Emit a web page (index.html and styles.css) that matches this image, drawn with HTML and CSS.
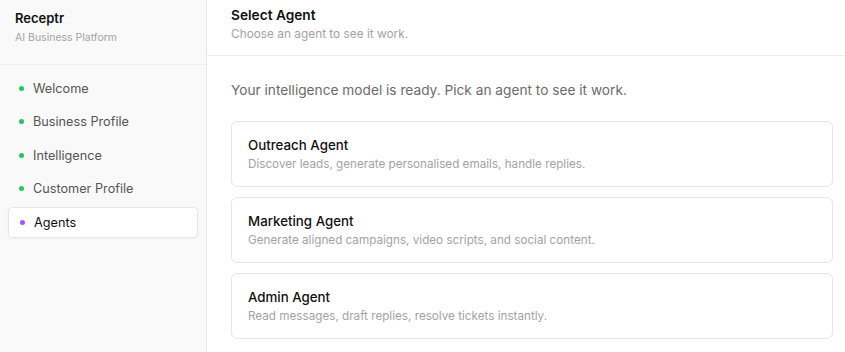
FILE: index.html
```html
<!DOCTYPE html>
<html lang="en">
<head>
<meta charset="utf-8">
<title>Receptr</title>
<link rel="stylesheet" href="styles.css">
</head>
<body>
<div class="app">
  <aside class="sidebar">
    <div class="brand">
      <div class="brand-name">Receptr</div>
      <div class="brand-sub">AI Business Platform</div>
    </div>
    <nav class="nav">
      <div class="nav-item"><span class="dot done"></span>Welcome</div>
      <div class="nav-item"><span class="dot done"></span>Business Profile</div>
      <div class="nav-item"><span class="dot done"></span>Intelligence</div>
      <div class="nav-item"><span class="dot done"></span>Customer Profile</div>
      <div class="nav-item active"><span class="dot current"></span>Agents</div>
    </nav>
  </aside>
  <main class="main">
    <header class="page-header">
      <h1 class="page-title">Select Agent</h1>
      <p class="page-sub">Choose an agent to see it work.</p>
    </header>
    <section class="content">
      <p class="intro">Your intelligence model is ready. Pick an agent to see it work.</p>
      <div class="cards">
        <div class="card">
          <div class="card-title">Outreach Agent</div>
          <div class="card-desc">Discover leads, generate personalised emails, handle replies.</div>
        </div>
        <div class="card">
          <div class="card-title">Marketing Agent</div>
          <div class="card-desc">Generate aligned campaigns, video scripts, and social content.</div>
        </div>
        <div class="card">
          <div class="card-title">Admin Agent</div>
          <div class="card-desc">Read messages, draft replies, resolve tickets instantly.</div>
        </div>
      </div>
    </section>
  </main>
</div>
</body>
</html>
```

FILE: styles.css
```css
* { box-sizing: border-box; }
html, body { margin: 0; padding: 0; }
body {
  font-family: Inter, "Noto Sans", sans-serif;
  color: #111;
  background: #fff;
  width: 845px;
  height: 352px;
  overflow: hidden;
}
.app { display: flex; height: 352px; }
.sidebar {
  width: 207px;
  flex: none;
  background: #f9f9f9;
  border-right: 1px solid #e8e8e8;
}
.brand {
  height: 65px;
  padding: 10px 15px 0;
  border-bottom: 1px solid #ececec;
}
.brand-name { font-size: 13px; font-weight: 600; line-height: 17px; color: #111; }
.brand-sub { font-size: 10.5px; line-height: 14px; color: #a3a3a3; margin-top: 4px; }
.nav {
  padding: 7.5px 8px 0;
  display: flex;
  flex-direction: column;
  gap: 2.5px;
}
.nav-item {
  height: 31px;
  display: flex;
  align-items: center;
  padding-left: 10px;
  font-size: 12.7px;
  color: #555;
  border: 1px solid transparent;
  border-radius: 4px;
}
.nav-item.active {
  background: #fff;
  border-color: #e6e6e6;
  color: #111;
  box-shadow: 0 1px 2px rgba(0,0,0,0.04);
}
.dot {
  width: 5px; height: 5px; border-radius: 50%;
  margin-right: 9px;
  flex: none;
}
.dot.done { background: #22c55e; }
.dot.current { background: #a855f7; margin-left: 1px; margin-right: 9px; }
.main { flex: 1; display: flex; flex-direction: column; }
.page-header {
  padding: 6px 24px 0;
  height: 56px;
  border-bottom: 1px solid #efefef;
}
.page-title { margin: 0; font-size: 13.7px; font-weight: 600; line-height: 18px; color: #111; }
.page-sub { margin: 2px 0 0; font-size: 11.85px; line-height: 16px; color: #a3a3a3; }
.content { padding: 24px 12px 0 24px; }
.intro { margin: 0 0 21px; font-size: 13.7px; line-height: 20px; color: #6b6b6b; }
.cards { display: flex; flex-direction: column; gap: 10px; }
.card {
  height: 66px;
  border: 1px solid #e5e5e5;
  border-radius: 6px;
  padding: 14px 16px 0;
  background: #fff;
}
.card-title { font-size: 13.3px; font-weight: 500; line-height: 18px; color: #111; }
.card-desc { margin-top: 2px; font-size: 11.7px; line-height: 16px; color: #a3a3a3; }
```
